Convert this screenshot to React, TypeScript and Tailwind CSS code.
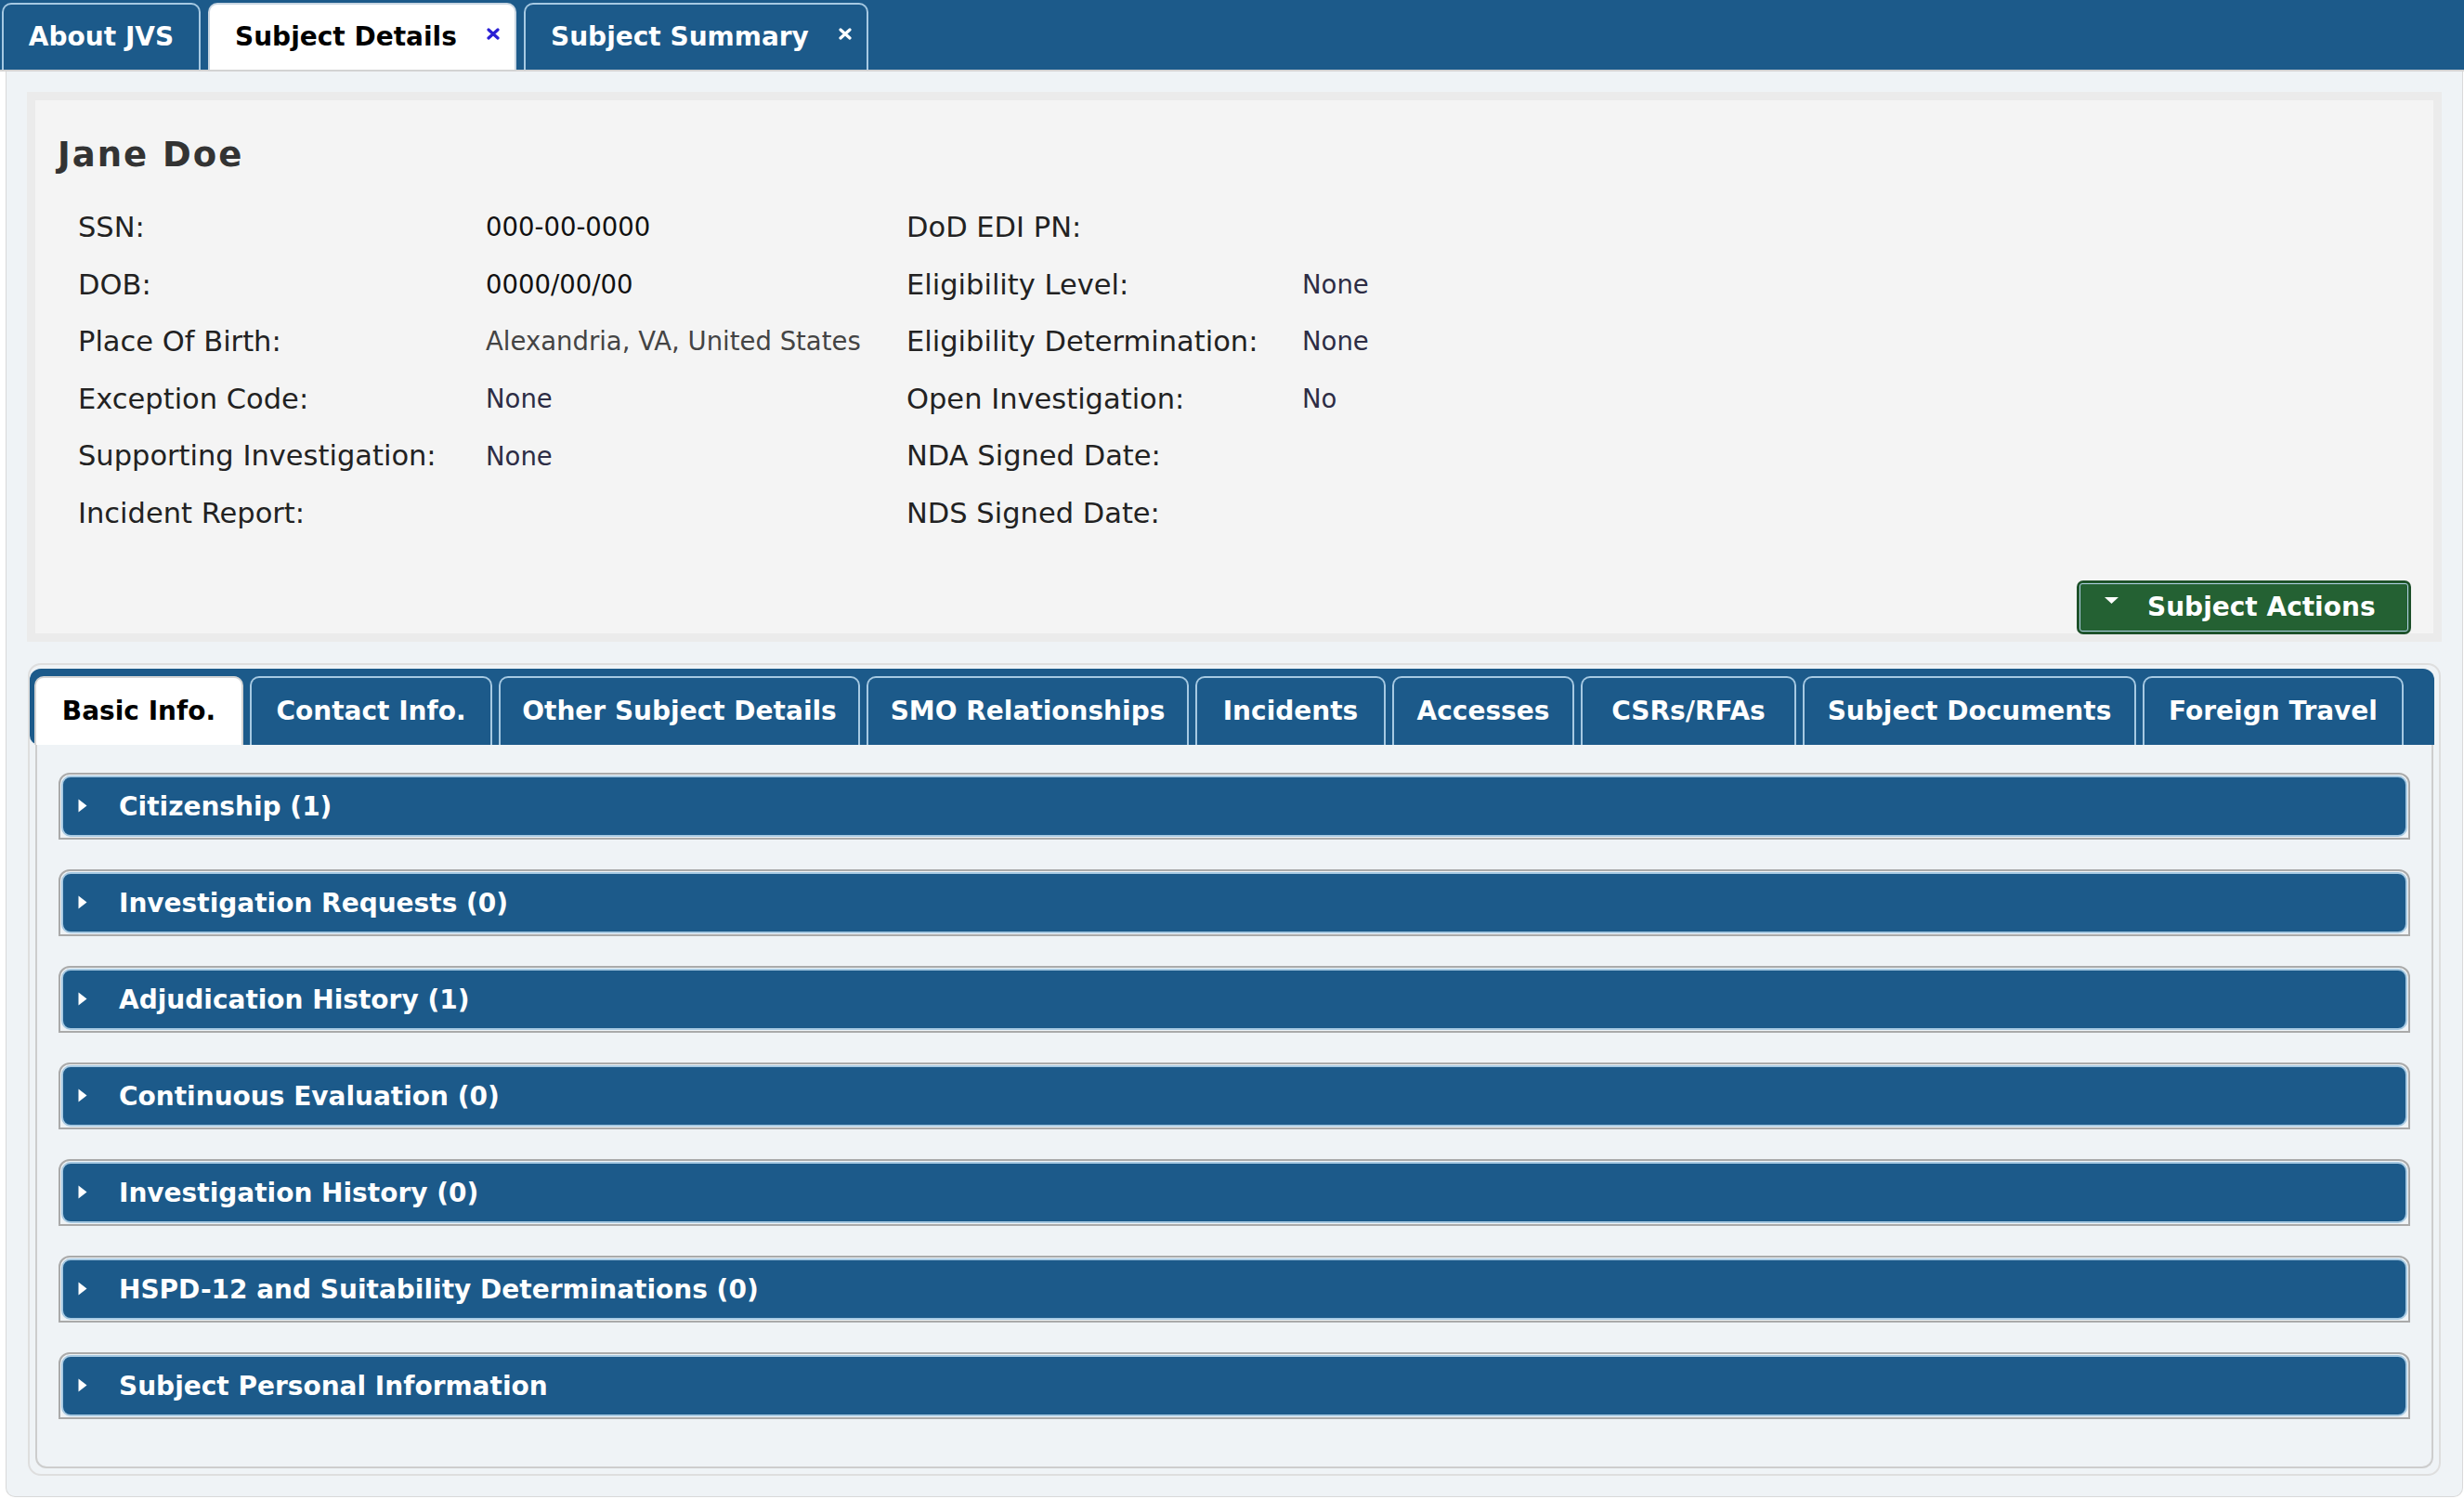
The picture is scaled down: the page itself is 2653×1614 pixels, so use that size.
import React from 'react';

const topTabs = [
  { label: 'About JVS', width: 'w-[214px]', active: false, closable: false },
  { label: 'Subject Details', width: 'w-[332px]', active: true, closable: true },
  { label: 'Subject Summary', width: 'w-[371px]', active: false, closable: true },
];

const details = [
  ['SSN:', '000-00-0000', 'text-[#111111]', 'DoD EDI PN:', ''],
  ['DOB:', '0000/00/00', 'text-[#111111]', 'Eligibility Level:', 'None'],
  ['Place Of Birth:', 'Alexandria, VA, United States', 'text-[#444444]', 'Eligibility Determination:', 'None'],
  ['Exception Code:', 'None', 'text-[#2d2d45]', 'Open Investigation:', 'No'],
  ['Supporting Investigation:', 'None', 'text-[#2d2d45]', 'NDA Signed Date:', ''],
  ['Incident Report:', '', 'text-[#2d2d45]', 'NDS Signed Date:', ''],
];

const subTabs = [
  { label: 'Basic Info.', width: 'w-[225px]' },
  { label: 'Contact Info.', width: 'w-[261px]' },
  { label: 'Other Subject Details', width: 'w-[389px]' },
  { label: 'SMO Relationships', width: 'w-[347px]' },
  { label: 'Incidents', width: 'w-[205px]' },
  { label: 'Accesses', width: 'w-[196px]' },
  { label: 'CSRs/RFAs', width: 'w-[232px]' },
  { label: 'Subject Documents', width: 'w-[359px]' },
  { label: 'Foreign Travel', width: 'w-[281px]' },
];

const sections = [
  'Citizenship (1)',
  'Investigation Requests (0)',
  'Adjudication History (1)',
  'Continuous Evaluation (0)',
  'Investigation History (0)',
  'HSPD-12 and Suitability Determinations (0)',
  'Subject Personal Information',
];

const CloseIcon = ({ color }: { color: string }) => (
  <svg width="14" height="13" viewBox="0 0 14 13" className="shrink-0">
    <path d="M2 2 L12 11 M12 2 L2 11" stroke={color} strokeWidth="3.2" strokeLinecap="round" />
  </svg>
);

export default function App() {
  return (
    <div className="min-h-screen bg-white font-[Tahoma,'DejaVu_Sans',sans-serif]">
      {/* Top tab strip */}
      <div className="h-[77px] bg-[#1c5a8a] border-b-2 border-[#d3d3d3] flex items-end gap-[8px] pl-[2px]">
        {topTabs.map((tab) => (
          <div
            key={tab.label}
            className={`${tab.width} h-[72px] rounded-t-[10px] border-2 border-b-0 flex items-center ${
              tab.active ? 'bg-white border-[#c9d6e2] text-black' : 'border-[#a6c9e2] text-white'
            } ${tab.closable ? 'pl-[27px] pr-[16px] justify-between' : 'justify-center'}`}
          >
            <span className="text-[28px] font-bold leading-none">{tab.label}</span>
            {tab.closable && (
              <span className="self-start mt-[25px]">
                <CloseIcon color={tab.active ? '#2a1fd4' : '#ffffff'} />
              </span>
            )}
          </div>
        ))}
      </div>

      {/* Page container */}
      <div className="ml-[6px] mr-[1px] bg-[#eff3f6] border border-t-0 border-[#d9d9d9] rounded-b-[10px] px-[22px] pt-[22px] pb-[22px]">
        {/* Subject header */}
        <div className="border-[9px] border-[#ebebeb] bg-[#f4f4f4] pt-[37px]">
          <h1 className="pl-[24px] text-[37px] leading-[44px] font-bold tracking-[2px] text-[#333333]">Jane Doe</h1>

          <div className="mt-[25px] pl-[46px] grid grid-cols-[439px_453px_426px_1fr]">
            {details.map(([label, value, valueColor, label2, value2]) => (
              <React.Fragment key={label}>
                <div className="h-[61.6px] flex items-center text-[30.5px] text-[#222222]">{label}</div>
                <div className={`h-[61.6px] flex items-center text-[27.5px] ${valueColor}`}>{value}</div>
                <div className="h-[61.6px] flex items-center text-[30.5px] text-[#222222]">{label2}</div>
                <div className="h-[61.6px] flex items-center text-[27.5px] text-[#2d2d45]">{value2}</div>
              </React.Fragment>
            ))}
          </div>

          <div className="mt-[41px] -mb-[1px] flex justify-end pr-[24px]">
            <button className="w-[360px] h-[58px] bg-[#246133] border-2 border-[#1d4f29] rounded-[7px] p-[1px]">
              <div className="h-full border border-[#b3cfe6] rounded-[3px] flex items-center pl-[25px]">
                <svg width="17" height="9" viewBox="0 0 17 9" className="self-start mt-[13px]">
                  <path d="M1 1 L16 1 L8.5 8 Z" fill="#ffffff" />
                </svg>
                <span className="ml-[30px] text-white font-bold text-[28px] leading-none">Subject Actions</span>
              </div>
            </button>
          </div>
        </div>

        {/* Detail tabs */}
        <div className="mt-[23px] mx-[1px] border-2 border-[#dedede] rounded-[14px] pt-[4px] pb-[6px]">
          <div className="mr-[5px] h-[82px] bg-[#1c5a8a] rounded-t-[12px] rounded-bl-[10px] flex items-end gap-[7px] pl-[5px]">
            {subTabs.map((tab, i) => (
              <div
                key={tab.label}
                className={`${tab.width} h-[74px] rounded-t-[10px] border-2 border-b-0 flex items-center justify-center text-[28px] font-bold ${
                  i === 0 ? 'bg-white border-[#d4d4d4] text-black' : 'border-[#a6c9e2] text-white'
                }`}
              >
                {tab.label}
              </div>
            ))}
          </div>

          <div className="mx-[6px] border-2 border-t-0 border-[#cdcdcd] rounded-b-[12px] bg-[#eff3f6] pt-[30px] pb-[51px] px-[23px] flex flex-col gap-[32px]">
            {sections.map((title) => (
              <div key={title} className="border-2 border-[#aaaaaa] rounded-t-[12px] p-[1px]">
                <div className="h-[66px] rounded-[10px] border-2 border-[#a6c9e2] bg-[#1c5a8a] flex items-center">
                  <svg width="10" height="15" viewBox="0 0 10 15" className="ml-[16px] shrink-0">
                    <path d="M0.5 0.5 L9.5 7.5 L0.5 14.5 Z" fill="#ffffff" />
                  </svg>
                  <span className="ml-[34px] pt-[2px] text-white font-bold text-[28px] leading-none">{title}</span>
                </div>
              </div>
            ))}
          </div>
        </div>
      </div>
    </div>
  );
}
